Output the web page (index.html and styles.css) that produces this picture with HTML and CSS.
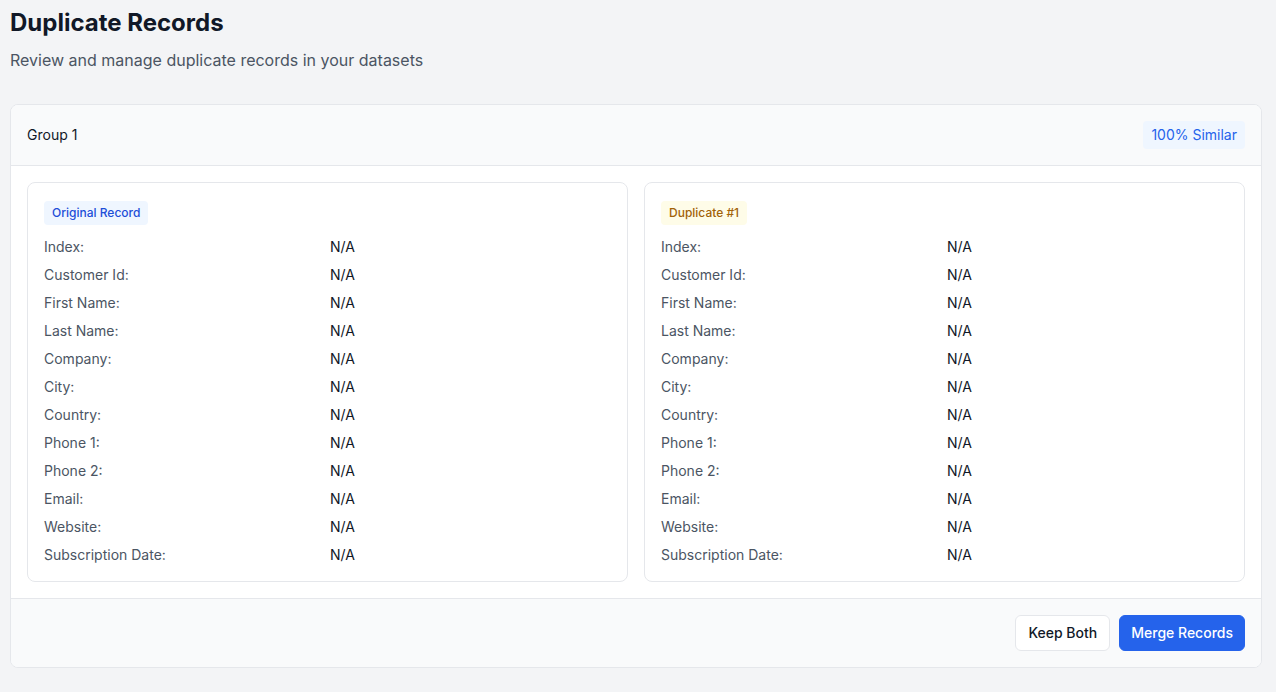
FILE: index.html
```html
<!DOCTYPE html>
<html lang="en">
<head>
<meta charset="utf-8">
<title>Duplicate Records</title>
<link rel="stylesheet" href="styles.css">
</head>
<body>
<main class="page">
  <header class="page-head">
    <h1 class="title">Duplicate Records</h1>
    <p class="subtitle">Review and manage duplicate records in your datasets</p>
  </header>

  <section class="group">
    <div class="group-head">
      <span class="group-name">Group 1</span>
      <span class="similar">100% Similar</span>
    </div>
    <div class="group-body">
      <div class="record">
        <div class="record-tag-row"><span class="tag tag-original">Original Record</span></div>
        <dl class="fields">
          <div class="field"><dt>Index:</dt><dd>N/A</dd></div>
          <div class="field"><dt>Customer Id:</dt><dd>N/A</dd></div>
          <div class="field"><dt>First Name:</dt><dd>N/A</dd></div>
          <div class="field"><dt>Last Name:</dt><dd>N/A</dd></div>
          <div class="field"><dt>Company:</dt><dd>N/A</dd></div>
          <div class="field"><dt>City:</dt><dd>N/A</dd></div>
          <div class="field"><dt>Country:</dt><dd>N/A</dd></div>
          <div class="field"><dt>Phone 1:</dt><dd>N/A</dd></div>
          <div class="field"><dt>Phone 2:</dt><dd>N/A</dd></div>
          <div class="field"><dt>Email:</dt><dd>N/A</dd></div>
          <div class="field"><dt>Website:</dt><dd>N/A</dd></div>
          <div class="field"><dt>Subscription Date:</dt><dd>N/A</dd></div>
        </dl>
      </div>
      <div class="record">
        <div class="record-tag-row"><span class="tag tag-duplicate">Duplicate #1</span></div>
        <dl class="fields">
          <div class="field"><dt>Index:</dt><dd>N/A</dd></div>
          <div class="field"><dt>Customer Id:</dt><dd>N/A</dd></div>
          <div class="field"><dt>First Name:</dt><dd>N/A</dd></div>
          <div class="field"><dt>Last Name:</dt><dd>N/A</dd></div>
          <div class="field"><dt>Company:</dt><dd>N/A</dd></div>
          <div class="field"><dt>City:</dt><dd>N/A</dd></div>
          <div class="field"><dt>Country:</dt><dd>N/A</dd></div>
          <div class="field"><dt>Phone 1:</dt><dd>N/A</dd></div>
          <div class="field"><dt>Phone 2:</dt><dd>N/A</dd></div>
          <div class="field"><dt>Email:</dt><dd>N/A</dd></div>
          <div class="field"><dt>Website:</dt><dd>N/A</dd></div>
          <div class="field"><dt>Subscription Date:</dt><dd>N/A</dd></div>
        </dl>
      </div>
    </div>
    <div class="group-foot">
      <button class="btn btn-secondary" type="button">Keep Both</button>
      <button class="btn btn-primary" type="button">Merge Records</button>
    </div>
  </section>
</main>
</body>
</html>
```

FILE: styles.css
```css
* { box-sizing: border-box; }

html, body {
  margin: 0;
  background: #f3f4f6;
  font-family: Inter, "Noto Sans", "Liberation Sans", sans-serif;
  color: #111827;
}

.page {
  padding: 7px 14px 24px 10px;
}

.page-head {
  margin-bottom: 32px;
}

.title {
  margin: 0;
  font-size: 24px;
  line-height: 32px;
  font-weight: 700;
  color: #111827;
}

.subtitle {
  margin: 9px 0 0 0;
  font-size: 16px;
  line-height: 24px;
  color: #4b5563;
}

.group {
  border: 1px solid #e5e7eb;
  border-radius: 8px;
  background: #ffffff;
  overflow: hidden;
}

.group-head {
  display: flex;
  align-items: center;
  justify-content: space-between;
  padding: 16px;
  background: #f9fafb;
  border-bottom: 1px solid #e5e7eb;
}

.group-name {
  font-size: 14px;
  line-height: 20px;
  font-weight: 400;
  color: #111827;
}

.similar {
  display: inline-block;
  padding: 4px 8px;
  border-radius: 4px;
  background: #eff6ff;
  color: #2563eb;
  font-size: 14px;
  line-height: 20px;
}

.group-body {
  display: grid;
  grid-template-columns: 1fr 1fr;
  gap: 16px;
  padding: 16px;
}

.record {
  border: 1px solid #e5e7eb;
  border-radius: 8px;
  padding: 18px 16px 16px 16px;
}

.record-tag-row {
  margin-bottom: 12px;
}

.tag {
  display: inline-block;
  padding: 4px 8px;
  border-radius: 4px;
  font-size: 12px;
  line-height: 16px;
  font-weight: 500;
}

.tag-original {
  background: #eff6ff;
  color: #1d4ed8;
}

.tag-duplicate {
  background: #fefce8;
  color: #a16207;
}

.fields {
  margin: 0;
  display: flex;
  flex-direction: column;
  gap: 8px;
}

.field {
  display: grid;
  grid-template-columns: 1fr 1fr;
  column-gap: 5px;
  font-size: 14px;
  line-height: 20px;
}

.field dt {
  color: #4b5563;
  font-weight: 400;
}

.field dd {
  margin: 0;
  color: #111827;
}

.group-foot {
  display: flex;
  justify-content: flex-end;
  gap: 9px;
  padding: 16px;
  background: #f9fafb;
  border-top: 1px solid #e5e7eb;
}

.btn {
  height: 36px;
  padding: 0 12px;
  border-radius: 6px;
  font-family: inherit;
  font-size: 14px;
  line-height: 20px;
  font-weight: 500;
  cursor: pointer;
}

.btn-secondary {
  background: #ffffff;
  border: 1px solid #e5e7eb;
  color: #111827;
}

.btn-primary {
  background: #2563eb;
  border: 1px solid #2563eb;
  color: #ffffff;
  padding: 0 11px;
}
```
